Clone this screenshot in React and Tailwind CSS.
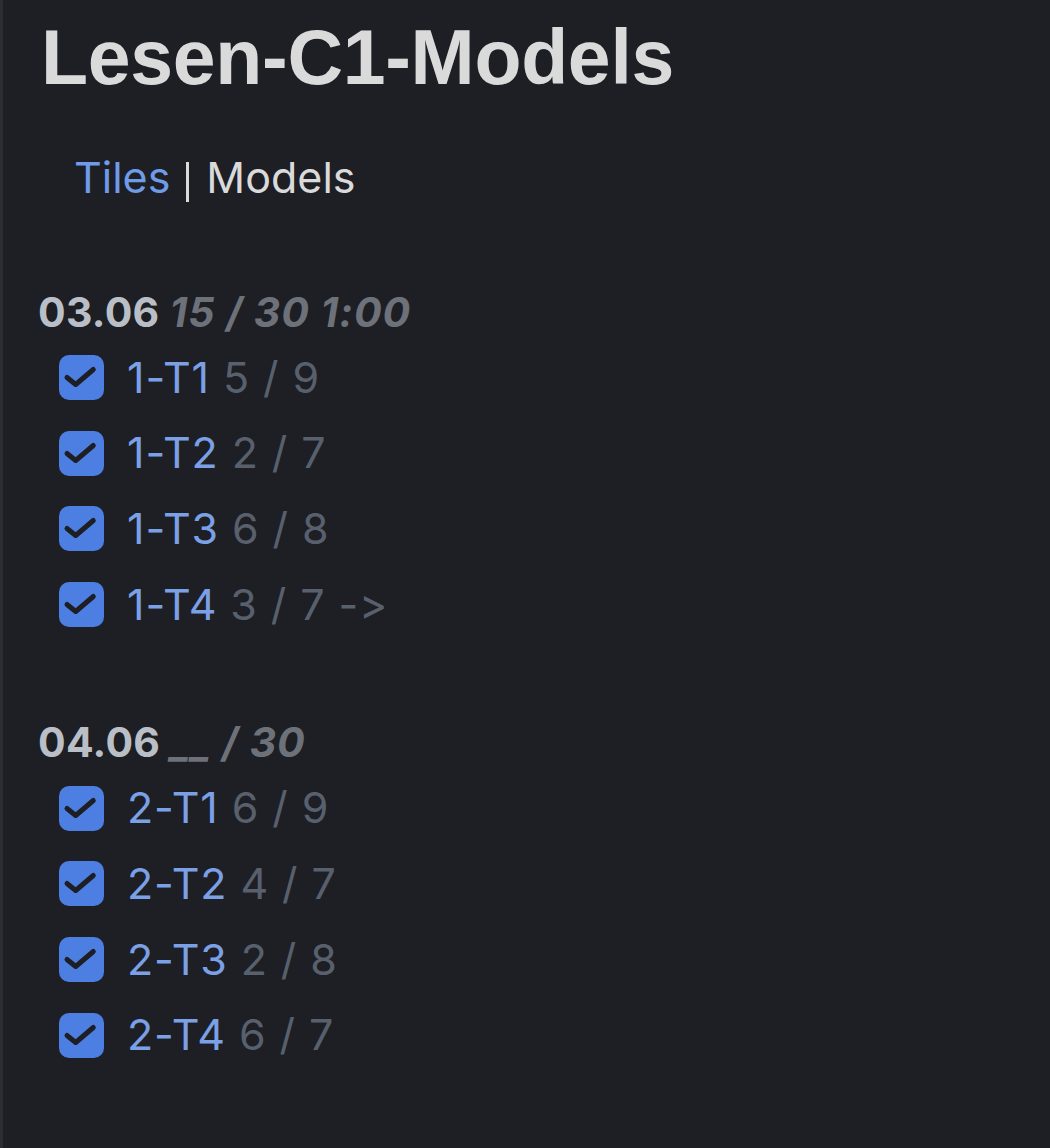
import React from "react";

const Check = () => (
  <span className="flex h-[45px] w-[45px] shrink-0 items-center justify-center rounded-[10px] bg-[#4c7fe1]">
    <svg width="45" height="45" viewBox="0 0 45 45" fill="none">
      <path d="M8 22.5 L16.7 29.5 L34.3 14.5" stroke="#1d1f24" strokeWidth="5" strokeLinecap="round" strokeLinejoin="round" />
    </svg>
  </span>
);

const Row = ({ name, count }) => (
  <li className="flex h-[75.7px] items-center gap-[23px] leading-[75.7px]">
    <Check />
    <span>
      <span className="text-[#7ba0e6]">{name}</span>{" "}
      <span className="text-[#58606e]">{count}</span>
    </span>
  </li>
);

const Section = ({ date, meta, rows }) => (
  <div>
    <div className="h-[58px] pl-[1px] text-[41px] font-bold leading-[60px] tracking-[0.3px] text-[#babfc7]">
      {date} <span className="italic tracking-[1px] text-[#6d7179]">{meta}</span>
    </div>
    <ul className="pl-[22px] text-[43px] tracking-[0.9px]">
      {rows.map((r) => (
        <Row key={r[0]} name={r[0]} count={r[1]} />
      ))}
    </ul>
  </div>
);

export default function App() {
  return (
    <div
      className="min-h-[1148px] w-[1050px] border-l-[3px] border-[#2b2d32] bg-[#1d1f24] pl-[34px] pt-[11px] [font-feature-settings:'calt'_0,'liga'_0]"
      style={{ fontFamily: "Inter, 'Noto Sans', sans-serif" }}
    >
      <h1
        className="pl-[4px] text-[77px] font-bold leading-[92px] tracking-[-0.3px] text-[#dadada]"
        style={{ fontFamily: "'Liberation Sans', Arial, sans-serif" }}
      >
        Lesen-C1-Models
      </h1>
      <div className="mt-[42px] pl-[37px] text-[43px] leading-[64.5px] text-[#dadada]">
        <span className="text-[#6f9be8]">Tiles</span>
        <span className="ml-[16px] mr-[17px] inline-block h-[40px] w-[3px] translate-y-[9px] bg-[#dadada] align-baseline" />
        <span>Models</span>
      </div>
      <div className="mt-[72px]">
        <Section
          date="03.06"
          meta="15 / 30 1:00"
          rows={[
            ["1-T1", "5 / 9"],
            ["1-T2", "2 / 7"],
            ["1-T3", "6 / 8"],
            ["1-T4", "3 / 7 ->"],
          ]}
        />
      </div>
      <div className="mt-[70px]">
        <Section
          date="04.06"
          meta="__ / 30"
          rows={[
            ["2-T1", "6 / 9"],
            ["2-T2", "4 / 7"],
            ["2-T3", "2 / 8"],
            ["2-T4", "6 / 7"],
          ]}
        />
      </div>
    </div>
  );
}
